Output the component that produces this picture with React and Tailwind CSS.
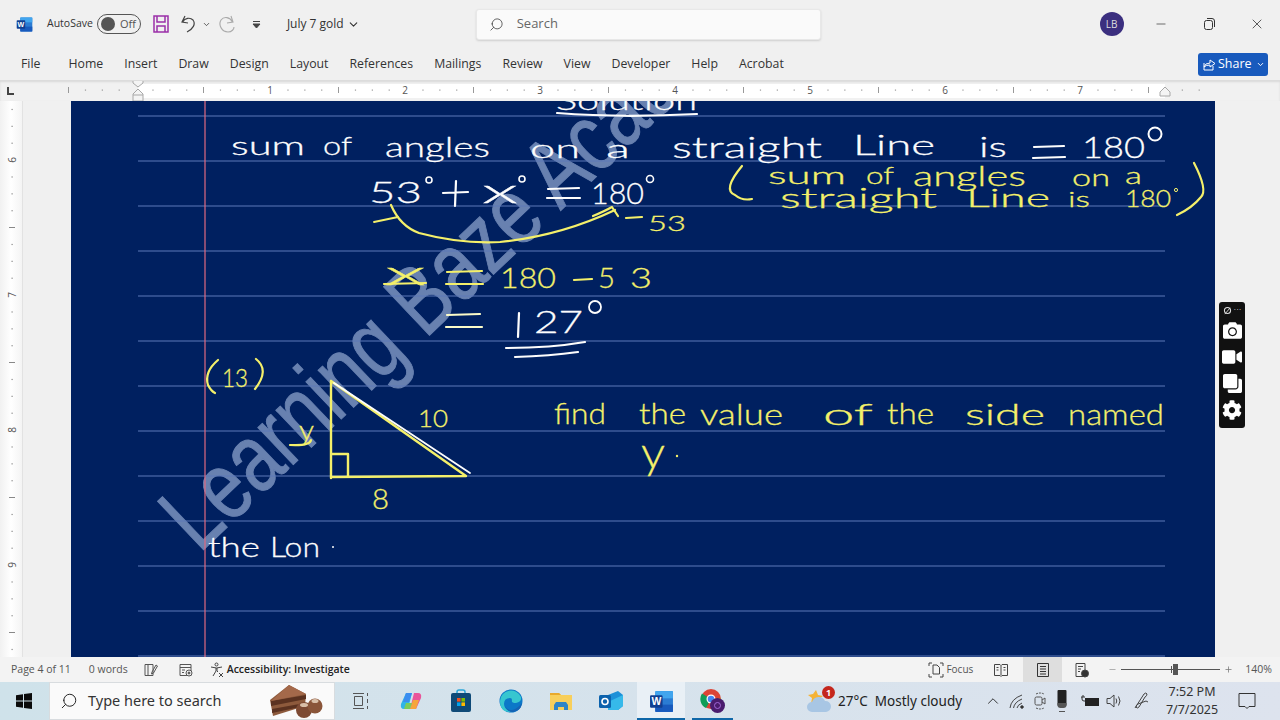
import React from 'react';
import { ChevronDown, ChevronUp, Minus, Plus, Search, X } from 'lucide-react';
import { FaCamera, FaVideo, FaClone, FaCog } from 'react-icons/fa';

const tabs = ['Home', 'Insert', 'Draw', 'Design', 'Layout', 'References', 'Mailings', 'Review', 'View', 'Developer', 'Help', 'Acrobat'];
const WHITE = '#fdfdfd';
const YELLOW = '#f4f06a';

// one word of pen ink, stretched to the width it has in the picture
function Ink({ x, y, w, size = 26, color = WHITE, children }) {
  return (
    <text x={x} y={y} textLength={w} lengthAdjust="spacingAndGlyphs" fontSize={size} fontWeight="300" fill={color} stroke={color} strokeWidth="0.3">
      {children}
    </text>
  );
}

function Stroke({ d, color = YELLOW, width = 2.2 }) {
  return <path d={d} fill="none" stroke={color} strokeWidth={width} strokeLinecap="round" strokeLinejoin="round" />;
}

function WordIcon({ size = 16 }) {
  return (
    <svg width={size} height={size} viewBox="0 0 24 24">
      <rect x="6" y="2" width="17" height="20" rx="1.5" fill="#2b7cd3" />
      <rect x="6" y="2" width="17" height="7" fill="#41a5ee" />
      <rect x="6" y="15" width="17" height="7" fill="#185abd" />
      <rect x="1" y="6" width="12" height="12" rx="1" fill="#103f91" />
      <text x="7" y="15.5" textAnchor="middle" fontSize="10" fontWeight="700" fill="#fff" fontFamily="'Liberation Sans',sans-serif">W</text>
    </svg>
  );
}

function TopRuler() {
  const marks = [];
  for (let i = -4; i <= 63; i++) {
    const x = 136 + (i * 135) / 8;
    if (i % 8 === 0) {
      if (i > 0) {
        marks.push(<text key={i} x={x - 1} y="12.5" textAnchor="middle" fontSize="10" fill="#555">{i / 8}</text>);
      }
    } else if (i % 4 === 0) {
      marks.push(<line key={i} x1={x} x2={x} y1="6" y2="12" stroke="#999" />);
    } else {
      marks.push(<rect key={i} x={x - 0.5} y="8.5" width="1.2" height="1.2" fill="#999" />);
    }
  }
  return (
    <div className="relative h-[21px] bg-[#f1f1f1] border-t border-[#dcdcdc] shadow-[inset_0_1px_2px_#d8d8d8]">
      <svg width="1280" height="21" className="block font-['Open_Sans',sans-serif]">
        <rect x="138" y="3" width="1027" height="14" fill="#ffffff" />
        <path d="M8 6v7h6" fill="none" stroke="#444" strokeWidth="2" />
        {marks}
        <path d="M133 -1h10v3l-5 4l-5 -4z M133 20v-7l5 -5l5 5v7z M133 14h10" fill="#f4f4f4" stroke="#a8a8a8" />
        <path d="M1160 15v-4l5 -5l5 5v4z" fill="#f4f4f4" stroke="#a8a8a8" />
      </svg>
    </div>
  );
}

function SideRuler() {
  const marks = [];
  for (let i = -3; i <= 32; i++) {
    const y = 160 + (i * 135) / 8 - 101;
    if (i % 8 === 0) {
      marks.push(<text key={i} x="12" y={y + 3.5} textAnchor="middle" fontSize="10" fill="#555" transform={`rotate(-90 12 ${y})`}>{6 + i / 8}</text>);
    } else if (i % 4 === 0) {
      marks.push(<line key={i} x1="9" x2="15" y1={y} y2={y} stroke="#888" />);
    } else {
      marks.push(<rect key={i} x="11.5" y={y - 0.5} width="1.2" height="1.2" fill="#888" />);
    }
  }
  return (
    <div className="w-[23px] h-full bg-gradient-to-r from-[#f1f1f1] via-white to-[#f4f4f4] border-r border-[#e2e2e2]">
      <svg width="22" height="556" className="block font-['Open_Sans',sans-serif]">{marks}</svg>
    </div>
  );
}

function Page() {
  const lines = [116, 161, 206, 251, 296, 341, 386, 431, 476, 521, 566, 611, 656];
  return (
    <div className="relative w-[1144px] h-full bg-[#002060] overflow-hidden">
      <svg width="1144" height="556" viewBox="71 101 1144 556" className="block font-['Lato',sans-serif]">
        <text x="199" y="554" transform="rotate(-43.5 199 554)" fontSize="97" textLength="810" lengthAdjust="spacingAndGlyphs" fill="#6881b0" stroke="#6881b0" strokeWidth="1" fontFamily="'Liberation Sans',sans-serif">
          Learning Baze Academy
        </text>
        {lines.map((y) => (
          <line key={y} x1="138" x2="1165" y1={y} y2={y} stroke="#5d79b8" strokeWidth="1" />
        ))}
        <line x1="205" x2="205" y1="101" y2="657" stroke="#e06a80" strokeWidth="1.2" />

        <Ink x={556} y={110} w={141} size={26}>Solution</Ink>
        <Stroke color={WHITE} d="M557 113 Q620 118 697 114" />

        <Ink x={231} y={155} w={74}>sum</Ink>
        <Ink x={323} y={155} w={29}>of</Ink>
        <Ink x={385} y={157} w={105} size={28}>angles</Ink>
        <Ink x={530} y={158} w={50}>on</Ink>
        <Ink x={606} y={158} w={24}>a</Ink>
        <Ink x={672} y={158} w={150} size={30}>straight</Ink>
        <Ink x={853} y={155} w={82} size={28}>Line</Ink>
        <Ink x={979} y={157} w={28} size={28}>is</Ink>
        <Stroke color={WHITE} d="M1034 147 L1064 146 M1033 158 L1065 157" />
        <Ink x={1082} y={158} w={63} size={30}>180</Ink>
        <circle cx="1155" cy="134" r="6.5" fill="none" stroke={WHITE} strokeWidth="2" />

        <Ink x={369} y={203} w={53} size={30}>53</Ink>
        <circle cx="429" cy="180" r="3" fill="none" stroke={WHITE} strokeWidth="1.6" />
        <Stroke color={WHITE} d="M443 193 L468 192 M456 181 L455 206" />
        <Ink x={482} y={203} w={36} size={34}>x</Ink>
        <circle cx="522" cy="179" r="3" fill="none" stroke={WHITE} strokeWidth="1.6" />
        <Stroke color={WHITE} d="M548 189 L579 188 M547 198 L580 198" />
        <Ink x={591} y={204} w={53} size={30}>180</Ink>
        <circle cx="650" cy="179" r="3.5" fill="none" stroke={WHITE} strokeWidth="1.6" />

        <Stroke d="M391 205 Q400 226 419 233 Q460 244 500 242 Q560 236 615 210" />
        <Stroke d="M593 216 Q605 211 612 207 L618 216" />
        <Stroke d="M374 222 L398 217" width={1.8} />
        <Stroke d="M626 218 L642 217" />
        <Ink x={648} y={231} w={38} size={21} color={YELLOW}>53</Ink>

        <Ink x={385} y={285} w={41} size={34} color={YELLOW}>x</Ink>
        <Stroke d="M384 284 L426 283" />
        <Stroke d="M447 272 L482 271 M446 284 L483 284" />
        <Ink x={500} y={288} w={56} size={27} color={YELLOW}>180</Ink>
        <Stroke d="M574 280 L592 279" />
        <Ink x={598} y={288} w={17} size={27} color={YELLOW}>5</Ink>
        <Ink x={630} y={288} w={22} size={27} color={YELLOW}>3</Ink>

        <Stroke color="#fbfbc8" d="M447 315 L480 314 M446 327 L482 327" />
        <Stroke color={WHITE} d="M519 313 L518 337" />
        <Ink x={534} y={333} w={49} size={31}>27</Ink>
        <circle cx="595" cy="307" r="6" fill="none" stroke={WHITE} strokeWidth="1.8" />
        <Stroke color={WHITE} d="M506 348 Q550 348 585 342 M515 357 Q550 356 578 352" />

        <Stroke d="M218 360 Q204 372 208 385 Q211 391 215 393" />
        <Ink x={222} y={387} w={26} size={26} color={YELLOW}>13</Ink>
        <Stroke d="M256 359 Q270 370 255 389" />

        <Stroke d="M331 381 L331 478 M331 477 L466 476 L331 381 M331 454 L348 454 L348 476" width={2.4} />
        <Stroke color={WHITE} d="M334 383 L470 473" width={1.8} />
        <Ink x={418} y={427} w={30} size={23} color={YELLOW}>10</Ink>
        <Ink x={299} y={440} w={15} size={28} color={YELLOW}>y</Ink>
        <Stroke d="M311 440 Q310 446 290 445" />
        <Ink x={372} y={509} w={17} size={27} color={YELLOW}>8</Ink>

        <Ink x={208} y={557} w={52} size={27}>the</Ink>
        <Ink x={270} y={557} w={50} size={27}>Lon</Ink>
        <circle cx="333" cy="547" r="1" fill={WHITE} />

        <Stroke d="M742 166 Q722 190 735 195 Q742 201 752 199" />
        <Ink x={768} y={184} w={78} size={24} color={YELLOW}>sum</Ink>
        <Ink x={866} y={184} w={28} size={24} color={YELLOW}>of</Ink>
        <Ink x={913} y={186} w={113} size={27} color={YELLOW}>angles</Ink>
        <Ink x={1072} y={186} w={38} size={24} color={YELLOW}>on</Ink>
        <Ink x={1125} y={184} w={17} size={24} color={YELLOW}>a</Ink>
        <Ink x={780} y={208} w={157} size={28} color={YELLOW}>straight</Ink>
        <Ink x={966} y={207} w={84} size={25} color={YELLOW}>Line</Ink>
        <Ink x={1068} y={207} w={22} size={22} color={YELLOW}>is</Ink>
        <Ink x={1125} y={207} w={46} size={24} color={YELLOW}>180</Ink>
        <circle cx="1176" cy="190" r="1.6" fill="none" stroke={YELLOW} />
        <Stroke d="M1194 163 Q1208 190 1201 197 Q1192 208 1177 215" />

        <Ink x={554} y={424} w={52} size={30} color={YELLOW}>find</Ink>
        <Ink x={639} y={424} w={47} size={30} color={YELLOW}>the</Ink>
        <Ink x={700} y={425} w={83} size={30} color={YELLOW}>value</Ink>
        <Ink x={823} y={425} w={50} size={30} color={YELLOW}>of</Ink>
        <Ink x={887} y={424} w={47} size={30} color={YELLOW}>the</Ink>
        <Ink x={965} y={425} w={80} size={30} color={YELLOW}>side</Ink>
        <Ink x={1068} y={425} w={96} size={30} color={YELLOW}>named</Ink>
        <Ink x={641} y={468} w={24} size={44} color={YELLOW}>y</Ink>
        <circle cx="677" cy="456" r="1.2" fill={YELLOW} />
      </svg>
    </div>
  );
}

function SnipBar() {
  return (
    <div className="absolute left-[1219px] top-[302px] w-[26px] h-[126px] bg-[#111] rounded-[3px] flex flex-col items-center text-white">
      <div className="h-[16px] w-full flex items-center justify-center gap-[2px]">
        <svg width="9" height="9" viewBox="0 0 10 10"><circle cx="5" cy="5" r="3.4" fill="none" stroke="#ddd" strokeWidth="1.2" /><path d="M2 9l6-7" stroke="#ddd" /></svg>
        <span className="text-[8px] leading-none text-[#ddd] font-['Liberation_Sans',sans-serif]">···</span>
      </div>
      <div className="flex flex-col items-center gap-[7px] mt-[3px]">
        <FaCamera size={19} />
        <FaVideo size={20} />
        <FaClone size={19} className="-scale-x-100" />
        <FaCog size={20} />
      </div>
    </div>
  );
}

function StatusBar() {
  return (
    <div className="h-[25px] bg-[#f3f3f3] flex items-center text-[10.5px] text-[#555] whitespace-nowrap font-['Open_Sans',sans-serif] [&>*]:shrink-0">
      <span className="ml-[11px]">Page 4 of 11</span>
      <span className="ml-[18px]">0 words</span>
      <svg className="ml-[15px]" width="16" height="16" viewBox="0 0 16 16" fill="none" stroke="#555">
        <path d="M2 2.5h8v11H2zM5 2.5v11M9 10l4-7 1.5 1-4 7-2 1z" />
      </svg>
      <svg className="ml-[19px]" width="16" height="16" viewBox="0 0 16 16" fill="none" stroke="#555">
        <path d="M2 2.5h11v11H2zM2 5.5h11M4 8h3M4 10.5h2" />
        <circle cx="11" cy="11" r="3" fill="#f3f3f3" />
        <circle cx="11" cy="11" r="1" fill="#555" />
      </svg>
      <svg className="ml-[15px]" width="16" height="16" viewBox="0 0 16 16" fill="none" stroke="#444">
        <circle cx="7.5" cy="2.5" r="1.5" />
        <path d="M2 5l5.5 1 5.5-1M7 6v3l-3 5M8 6v3l1 1M10 11l4 4M14 11l-4 4" />
      </svg>
      <span className="ml-[2px] font-semibold text-[#222]">Accessibility: Investigate</span>

      <svg className="ml-auto" width="16" height="16" viewBox="0 0 16 16" fill="none" stroke="#444">
        <path d="M1 4V1h3M12 1h3v3M15 12v3h-3M4 15H1v-3M5 3h4l2.5 2.5V12H5z" />
      </svg>
      <span className="ml-[2px] text-[10px]">Focus</span>
      <svg className="ml-[20px]" width="16" height="16" viewBox="0 0 16 16" fill="none" stroke="#444">
        <path d="M1.5 2.5h5.5l1 1 1-1h5.5v11H9l-1 1-1-1H1.5zM8 3.5v10M3.5 5.5h2M3.5 8h2M10.5 5.500h2M10.5 8h2" />
      </svg>
      <div className="ml-[14px] w-[39px] h-full bg-[#dedede] flex items-center justify-center">
        <svg width="14" height="16" viewBox="0 0 14 16" fill="none" stroke="#333">
          <path d="M1.5 1.5h11v13h-11zM4 4.5h6M4 7h6M4 9.5h6M4 12h6" />
        </svg>
      </div>
      <svg className="ml-[12px]" width="16" height="16" viewBox="0 0 16 16" fill="none" stroke="#444">
        <path d="M2 1.5h9v13H2zM4 4.500h5M4 7h3M4 9.500h2" />
        <circle cx="11" cy="11.5" r="3.5" fill="#333" />
      </svg>
      <Minus size={9} className="ml-[18px] text-[#999]" />
      <div className="relative ml-[4px] w-[99px] h-[1px] bg-[#555]">
        <div className="absolute left-[52px] top-[-5px] w-[5px] h-[11px] bg-[#555]" />
        <div className="absolute left-[50px] top-[-3px] w-[1px] h-[7px] bg-[#555]" />
      </div>
      <Plus size={9} className="ml-[4px] text-[#777]" />
      <span className="ml-[12px] mr-[8px]">140%</span>
    </div>
  );
}

function Taskbar() {
  return (
    <div className="h-[38px] bg-gradient-to-r from-[#cfe2ea] to-[#dde3ee] flex items-center font-['Open_Sans',sans-serif] text-[#222] [&>*]:shrink-0">
      <svg className="ml-[16px]" width="16" height="16" viewBox="0 0 16 16" fill="#0b0b0b">
        <path d="M0 2.2l7-1v6.4H0zM8 1l8-1v7.6H8zM0 8.4h7v6.4l-7-1zM8 8.4h8V16l-8-1z" />
      </svg>
      <div className="ml-[17px] w-[286px] h-[38px] bg-[#fafafa] border border-[#d8dcdf] flex items-center">
        <Search size={18} strokeWidth={1.3} className="ml-[10px] -scale-x-100 text-[#222]" />
        <span className="ml-[10px] text-[14.5px] text-[#333] font-['Noto_Sans',sans-serif]">Type here to search</span>
        <svg className="ml-[48px]" width="56" height="36" viewBox="0 0 56 36">
          <path d="M1 17L20 2l17 9-1 12L4 33z" fill="#8d5a3c" />
          <path d="M2 18l35-6v4L2 23zM3 26l33-6v3L3 30z" fill="#5b3220" />
          <path d="M20 2l17 9L2 18z" fill="#a4694a" />
          <circle cx="35" cy="27" r="8" fill="#7d4a33" />
          <circle cx="46" cy="23" r="7.5" fill="#8a5539" />
          <ellipse cx="35" cy="22" rx="4" ry="2" fill="#d9bfa8" />
          <ellipse cx="46" cy="18" rx="3.5" ry="2" fill="#d9bfa8" />
        </svg>
      </div>
      <svg className="ml-[17px]" width="18" height="18" viewBox="0 0 18 18" fill="none" stroke="#555">
        <path d="M1 1.5h11M1 16.5h11M2.5 4.5h8v9h-8zM15.5 1v3M15.5 7v4M15.5 14v3" />
      </svg>
      <svg className="ml-[30px]" width="22" height="22" viewBox="0 0 22 22">
        <path d="M6 3h6L8 19H4Q0 19 1 14z" fill="#2fb4e8" />
        <path d="M16 19h-6L14 3h4q4 0 3 5z" fill="#e9559a" />
        <path d="M6 3h6L9 12H3z" fill="#3a8df0" />
        <path d="M16 19h-6l3-9h6z" fill="#f6a53c" />
        <path d="M4 19h6l2-6H6z" fill="#7ccb5a" />
      </svg>
      <svg className="ml-[28px]" width="22" height="24" viewBox="0 0 22 24">
        <path d="M7 5V3a2 2 0 012-2h4a2 2 0 012 2v2" fill="none" stroke="#2ba6d8" strokeWidth="1.5" />
        <rect x="1" y="4" width="20" height="19" rx="2" fill="#0f4a78" />
        <rect x="7" y="9" width="3.6" height="3.6" fill="#f25022" />
        <rect x="11.4" y="9" width="3.6" height="3.6" fill="#7fba00" />
        <rect x="7" y="13.4" width="3.6" height="3.6" fill="#00a4ef" />
        <rect x="11.4" y="13.4" width="3.6" height="3.6" fill="#ffb900" />
      </svg>
      <svg className="ml-[27px]" width="24" height="24" viewBox="0 0 24 24">
        <circle cx="12" cy="12" r="11.5" fill="#0c78c8" />
        <path d="M1 12A11 11 0 0122 8q1 5-5 6-5 0-4-3 0-2-2-2-6 0-6 6 0 6 8 8-12 1-12-11z" fill="#37c6d0" />
        <path d="M23 14q-1 8-9 9-6 0-8-6 2 4 7 4 4 0 10-7z" fill="#1563b4" />
      </svg>
      <svg className="ml-[27px]" width="22" height="22" viewBox="0 0 22 22">
        <path d="M0 3h9l2 2h11v15H0z" fill="#f8cf5b" />
        <path d="M0 3h9l2 2H0z" fill="#e8a92c" />
        <path d="M6 12h10l2 3v5h-4v-3H8v3H4v-5z" fill="#2f85c7" />
      </svg>
      <svg className="ml-[27px]" width="24" height="22" viewBox="0 0 24 22">
        <path d="M9 5l10-4 5 4v11l-5 4H9z" fill="#1c90d8" />
        <path d="M9 12l15-7v11l-5 4H9z" fill="#36b9ea" />
        <rect x="0" y="5" width="12" height="13" rx="1.5" fill="#0b62ad" />
        <circle cx="6" cy="11.5" r="3" fill="none" stroke="#fff" strokeWidth="1.6" />
      </svg>
      <div className="relative ml-[14px] w-[48px] h-full bg-[#e9f0f6] flex items-center justify-center">
        <WordIcon size={25} />
        <div className="absolute bottom-0 inset-x-0 h-[2px] bg-[#0f67a8]" />
      </div>
      <div className="relative ml-[7px] w-[41px] h-full flex items-center justify-center">
        <svg width="26" height="26" viewBox="0 0 26 26">
          <circle cx="11" cy="11" r="10" fill="#db4437" />
          <path d="M11 11L2 5.5A10 10 0 006 20z" fill="#0f9d58" />
          <path d="M11 11l10-1a10 10 0 01-5 10z" fill="#f4b400" />
          <circle cx="11" cy="11" r="4.5" fill="#fff" />
          <circle cx="11" cy="11" r="3.3" fill="#4285f4" />
          <circle cx="17.5" cy="17.5" r="7.5" fill="#4a1c6e" />
          <circle cx="17.5" cy="17.5" r="3" fill="none" stroke="#a368d8" />
        </svg>
        <div className="absolute bottom-0 inset-x-0 h-[2px] bg-[#0f67a8]" />
      </div>
      <div className="relative ml-[73px] w-[26px] h-[26px]">
        <svg width="26" height="26" viewBox="0 0 26 26">
          <path d="M10 2l2 5 5 1-4 3 1 4-4-2-5 3 1-6-4-3 5-1z" fill="#f5b335" />
          <path d="M6 24a5 5 0 010-10 7 7 0 0113-1 5.500 5.500 0 011 11z" fill="#a8c6e4" />
        </svg>
        <div className="absolute -top-[2px] right-[-3px] w-[13px] h-[13px] rounded-full bg-[#c4261c] text-white text-[9px] font-bold leading-[13px] text-center">1</div>
      </div>
      <span className="ml-[6px] w-[124px] text-[13.5px] font-['Noto_Sans',sans-serif] whitespace-nowrap">27°C&nbsp; Mostly cloudy</span>
      <ChevronUp size={18} strokeWidth={1.2} className="ml-[22px]" />
      <svg className="ml-[7px]" width="16" height="16" viewBox="0 0 16 16" fill="none" stroke="#444">
        <path d="M1 15Q2 6 13 2M4.500 15Q5.500 9 13 6M8 15q.5-3 5-5" />
        <circle cx="13" cy="14" r="1.300" fill="#222" />
      </svg>
      <svg className="ml-[8px]" width="14" height="20" viewBox="0 0 14 20" fill="none" stroke="#555">
        <path d="M3 3q4-2 8 0M3 17q4 2 8 0" strokeDasharray="2 1" />
        <rect x="2" y="6" width="7" height="8" rx="1.500" />
        <path d="M9 9l3-2v6l-3-2" />
      </svg>
      <svg className="ml-[10px]" width="10" height="24" viewBox="0 0 10 24" fill="#222">
        <rect x="0.500" y="1" width="9" height="16" rx="1" />
        <path d="M0.500 14h9v2a3 3 0 01-3 3h-3a3 3 0 01-3-3zM2 22h6v1H2z" fill="#555" />
      </svg>
      <svg className="ml-[14px]" width="18" height="14" viewBox="0 0 18 14">
        <path d="M0 3h4M2 1v2M1 3v2a2 2 0 002 2h2" fill="none" stroke="#333" />
        <rect x="4" y="4" width="14" height="8" fill="#222" />
      </svg>
      <svg className="ml-[7px]" width="16" height="16" viewBox="0 0 16 16" fill="none" stroke="#444">
        <path d="M1 5.500h3L8 2v12l-4-3.500H1zM10 5.500q1.500 2.500 0 5M12.500 3.500q3 4.500 0 9" />
      </svg>
      <svg className="ml-[12px]" width="16" height="18" viewBox="0 0 16 18" fill="none" stroke="#444">
        <path d="M1 16L10 2q2-2 3 0 0 2-2 3L5 15q-2 2-3 0 0-2 2-3l8-3 2 1" />
      </svg>
      <div className="ml-[20px] w-[44px] flex flex-col items-center text-[12.5px] leading-[18px] text-[#333] font-['Noto_Sans',sans-serif] whitespace-nowrap">
        <span>7:52 PM</span>
        <span>7/7/2025</span>
      </div>
      <svg className="ml-[24px]" width="18" height="18" viewBox="0 0 18 18" fill="none" stroke="#333">
        <path d="M1 1.500h16v13h-6l-2 2-2-2H1z" />
      </svg>
    </div>
  );
}

export default function App() {
  return (
    <div className="relative w-[1280px] h-[720px] overflow-hidden flex flex-col bg-[#f0f0f0] font-['Open_Sans',sans-serif]">
      {/* title bar */}
      <div className="h-[48px] flex items-center text-[#333] [&>*]:shrink-0">
        <div className="ml-[16px]"><WordIcon size={17} /></div>
        <span className="ml-[14px] text-[10.5px]">AutoSave</span>
        <div className="ml-[4px] w-[44px] h-[20px] rounded-full border border-[#555] flex items-center pl-[3px]">
          <div className="w-[14px] h-[14px] rounded-full bg-[#555]" />
          <span className="ml-[5px] text-[11px] text-[#555]">Off</span>
        </div>
        <svg className="ml-[12px]" width="16" height="18" viewBox="0 0 16 18" fill="none" stroke="#9a2fa8" strokeWidth="1.500">
          <path d="M1 1h14v16H1zM4 1v6h8V1M4 17v-6h8v6" />
        </svg>
        <svg className="ml-[11px]" width="16" height="18" viewBox="0 0 16 18" fill="none" stroke="#444" strokeWidth="1.200">
          <path d="M5 1L2 7l6 1M2.500 7C5 3 10 2 13 5c3 4 0 9-6 12" />
        </svg>
        <ChevronDown size={9} strokeWidth={2} className="ml-[6px]" />
        <svg className="ml-[7px]" width="18" height="18" viewBox="0 0 18 18" fill="none" stroke="#aaa" strokeWidth="1.100">
          <path d="M13 1l2 6-6 1M14.500 7C12 2 6 1 3 5c-3 5 1 12 7 12 4 0 6-3 6-5" />
        </svg>
        <svg className="ml-[16px]" width="9" height="9" viewBox="0 0 9 9" fill="none" stroke="#444">
          <path d="M1 1.500h7" />
          <path d="M1 4h7L4.500 8z" fill="#444" />
        </svg>
        <span className="ml-[26px] text-[12px] whitespace-nowrap">July 7 gold</span>
        <ChevronDown size={13} className="ml-[3px]" />
        <div className="ml-[116px] w-[345px] h-[31px] rounded-[3px] bg-[#fafafa] border border-[#e8e8e8] shadow-[0_1px_2px_#cfcfcf] flex items-center">
          <Search size={15} strokeWidth={1.200} className="ml-[12px] -scale-x-100" />
          <span className="ml-[13px] text-[13px] text-[#666]">Search</span>
        </div>
        <div className="ml-[279px] w-[24px] h-[24px] rounded-full bg-[#3b2f7f] text-[#ddd] text-[10px] flex items-center justify-center">LB</div>
        <Minus size={14} strokeWidth={1.200} className="ml-[30px]" />
        <svg className="ml-[36px]" width="11" height="12" viewBox="0 0 11 12" fill="none" stroke="#333">
          <rect x="0.500" y="2.500" width="8" height="9" rx="2" />
          <path d="M3 .5h5a2.500 2.500 0 012.500 2.500v6" />
        </svg>
        <X size={16} strokeWidth={1.200} className="ml-[34px]" />
      </div>

      {/* ribbon tabs */}
      <div className="h-[32px] flex items-center text-[12.3px] text-[#333]">
        <span className="ml-[21px]">File</span>
        <div className="ml-[28px] flex gap-[21px]">
          {tabs.map((t) => <span key={t}>{t}</span>)}
        </div>
        <div className="ml-auto mr-[12px] w-[70px] h-[23px] rounded-[3px] bg-[#185abd] text-white flex items-center pl-[5px]">
          <svg width="13" height="13" viewBox="0 0 13 13" fill="none" stroke="#fff">
            <path d="M1 5v7h9V8M1 9q1-4 6-4V2l5 3.500L7 9V7Q3 7 1 9z" />
          </svg>
          <span className="ml-[2px] text-[12.5px]">Share</span>
          <ChevronDown size={9} strokeWidth={2.500} className="ml-[4px]" />
        </div>
      </div>

      <TopRuler />

      {/* document */}
      <div className="h-[556px] flex">
        <SideRuler />
        <div className="w-[48px]" />
        <Page />
      </div>

      <StatusBar />
      <Taskbar />
      <SnipBar />
    </div>
  );
}
